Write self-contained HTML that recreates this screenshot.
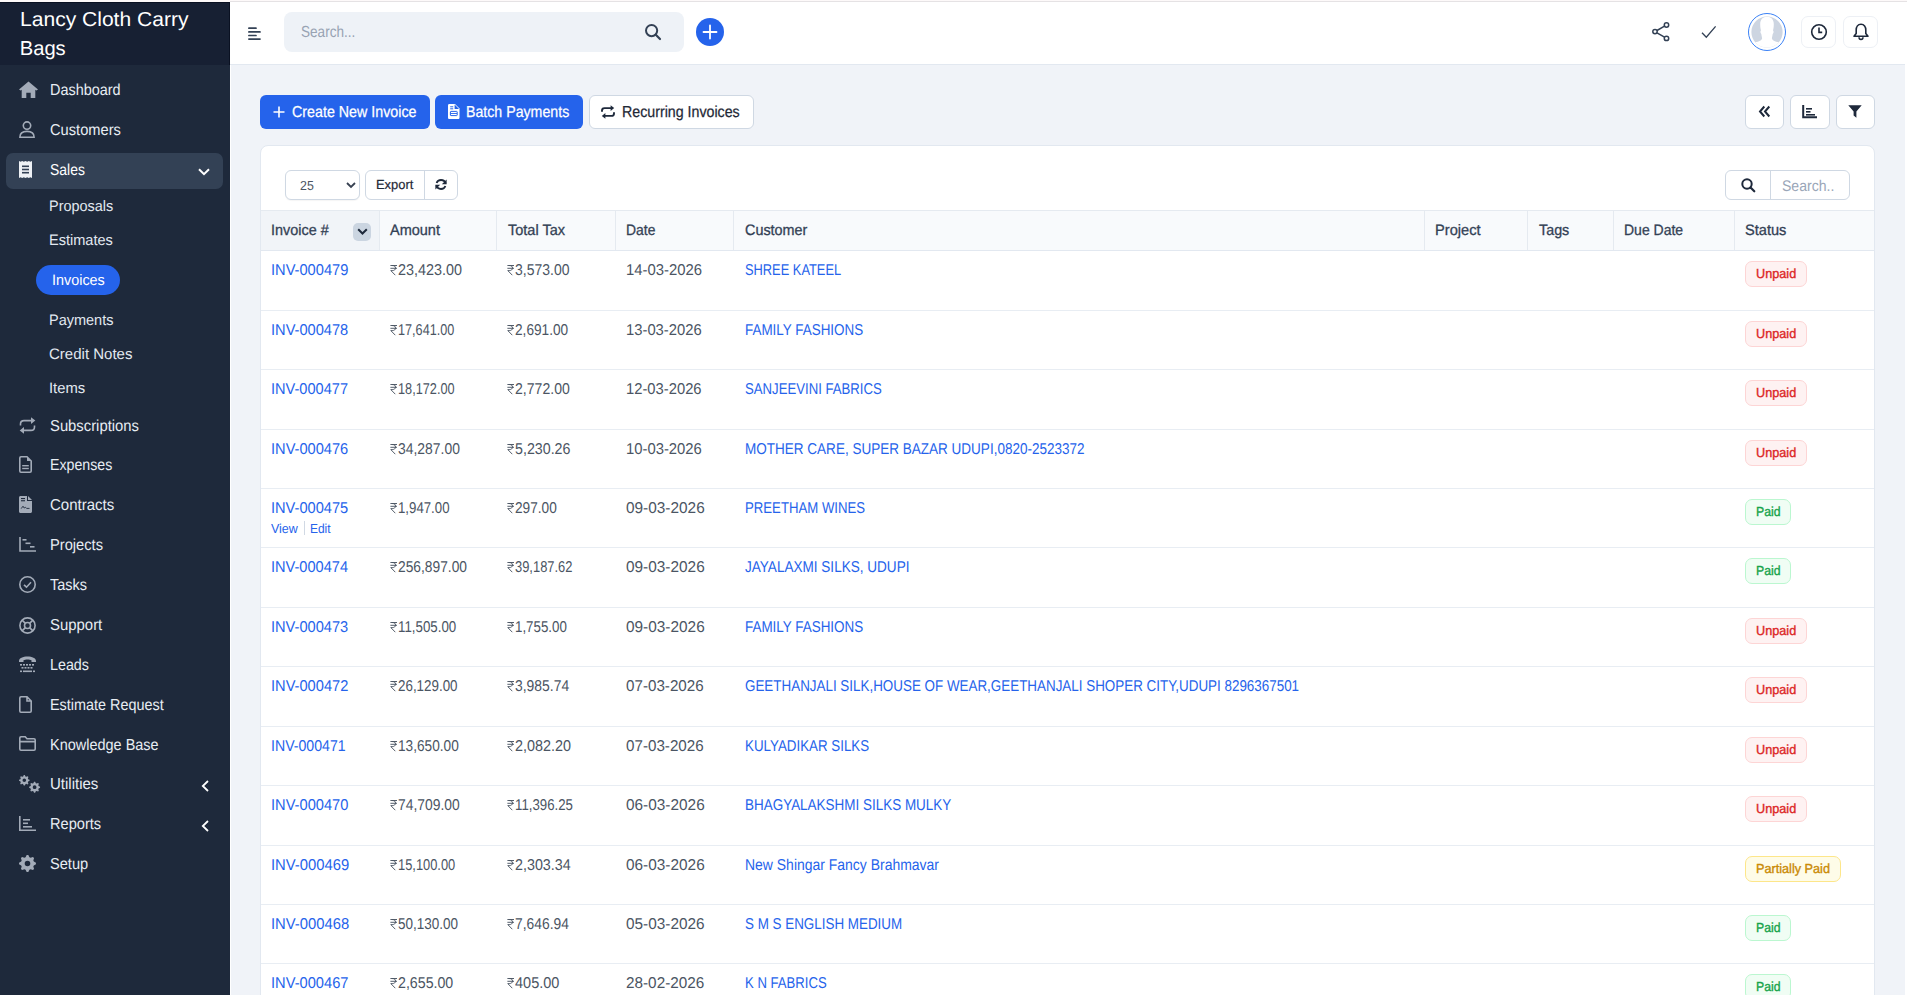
<!DOCTYPE html>
<html><head><meta charset="utf-8"><style>
*{box-sizing:border-box;margin:0;padding:0}
html,body{width:1907px;height:995px;overflow:hidden;background:#fff;font-family:"Liberation Sans",sans-serif;position:relative;text-rendering:geometricPrecision}
.t{position:absolute;line-height:1;white-space:nowrap;transform-origin:0 0}
svg{position:absolute;overflow:visible}
.b{position:absolute}
.ic{fill:#a3abb8}
.ics{fill:none;stroke:#a3abb8;stroke-width:1.6}
</style></head><body>
<div class="b" style="left:0px;top:0px;width:1907px;height:2px;background:#fdf9f9"></div>
<div class="b" style="left:230px;top:1px;width:1677px;height:1px;background:#e5e2e4"></div>
<div class="b" style="left:0px;top:2px;width:230px;height:993px;background:#1e293b"></div>
<div class="b" style="left:0px;top:2px;width:230px;height:63px;background:#172033;border-right:1px solid #0a1122;border-top:1px solid #0a1122"></div>
<div class="b" style="left:230px;top:2px;width:1675px;height:63px;background:#fff;border-bottom:1px solid #e2e8f0"></div>
<div class="b" style="left:231px;top:65px;width:1674px;height:930px;background:#f0f3f8"></div>
<div class="t" style="left:19.70px;top:10.00px;font-size:20.2px;color:#fff;transform:scaleX(1.0429);">Lancy Cloth Carry</div>
<div class="t" style="left:19.70px;top:39.00px;font-size:20.2px;color:#fff;">Bags</div>
<div class="b" style="left:6px;top:153px;width:217px;height:36px;border-radius:7px;background:#334155"></div>
<div class="b" style="left:36px;top:265px;width:84px;height:30px;border-radius:15px;background:#2563eb"></div>
<div class="t" style="left:50.30px;top:83.00px;font-size:15.84px;color:#e8edf3;transform:scaleX(0.9124);">Dashboard</div>
<div class="t" style="left:50.30px;top:123.00px;font-size:15.84px;color:#e8edf3;transform:scaleX(0.9258);">Customers</div>
<div class="t" style="left:50.30px;top:163.00px;font-size:15.84px;color:#fff;transform:scaleX(0.8808);">Sales</div>
<div class="t" style="left:50.30px;top:419.00px;font-size:15.84px;color:#e8edf3;transform:scaleX(0.9360);">Subscriptions</div>
<div class="t" style="left:50.30px;top:458.00px;font-size:15.84px;color:#e8edf3;transform:scaleX(0.8970);">Expenses</div>
<div class="t" style="left:50.30px;top:498.00px;font-size:15.84px;color:#e8edf3;transform:scaleX(0.9471);">Contracts</div>
<div class="t" style="left:50.30px;top:538.00px;font-size:15.84px;color:#e8edf3;transform:scaleX(0.9263);">Projects</div>
<div class="t" style="left:50.30px;top:578.00px;font-size:15.84px;color:#e8edf3;transform:scaleX(0.9138);">Tasks</div>
<div class="t" style="left:50.30px;top:618.00px;font-size:15.84px;color:#e8edf3;transform:scaleX(0.9427);">Support</div>
<div class="t" style="left:50.30px;top:658.00px;font-size:15.84px;color:#e8edf3;transform:scaleX(0.9037);">Leads</div>
<div class="t" style="left:50.30px;top:698.00px;font-size:15.84px;color:#e8edf3;transform:scaleX(0.9103);">Estimate Request</div>
<div class="t" style="left:50.30px;top:738.00px;font-size:15.84px;color:#e8edf3;transform:scaleX(0.9143);">Knowledge Base</div>
<div class="t" style="left:50.30px;top:777.00px;font-size:15.84px;color:#e8edf3;transform:scaleX(0.9481);">Utilities</div>
<div class="t" style="left:50.30px;top:817.00px;font-size:15.84px;color:#e8edf3;transform:scaleX(0.9231);">Reports</div>
<div class="t" style="left:50.30px;top:857.00px;font-size:15.84px;color:#e8edf3;transform:scaleX(0.9228);">Setup</div>
<div class="t" style="left:49.40px;top:199.00px;font-size:15.12px;color:#e2e8f0;transform:scaleX(0.9563);">Proposals</div>
<div class="t" style="left:49.40px;top:233.00px;font-size:15.12px;color:#e2e8f0;transform:scaleX(0.9627);">Estimates</div>
<div class="t" style="left:52.10px;top:273.00px;font-size:15.12px;color:#fff;transform:scaleX(0.9519);">Invoices</div>
<div class="t" style="left:49.40px;top:313.00px;font-size:15.12px;color:#e2e8f0;transform:scaleX(0.9594);">Payments</div>
<div class="t" style="left:49.40px;top:347.00px;font-size:15.12px;color:#e2e8f0;transform:scaleX(0.9937);">Credit Notes</div>
<div class="t" style="left:49.40px;top:381.00px;font-size:15.12px;color:#e2e8f0;transform:scaleX(0.9793);">Items</div>
<svg style="left:19px;top:81px" width="19" height="17" viewBox="0 0 19 17"><path class="ic" d="M9.5 0.5 L19 8.6 L17.4 9.6 L16.3 8.8 V17 H11.7 V11.8 H7.3 V17 H2.7 V8.8 L1.6 9.6 L0 8.6 Z"/></svg>
<svg style="left:19px;top:121px" width="16" height="17" viewBox="0 0 16 17"><circle class="ics" cx="8" cy="4.6" r="3.7"/><path class="ics" d="M0.9 16.2 C0.9 12.2 3.6 10.4 8 10.4 C12.4 10.4 15.1 12.2 15.1 16.2 Z"/></svg>
<svg style="left:19px;top:161px" width="13" height="17" viewBox="0 0 13 17"><path d="M0 0 L1.6 0.8 L3.2 0 L4.8 0.8 L6.5 0 L8.2 0.8 L9.8 0 L11.4 0.8 L13 0 V17 L11.4 16.2 L9.8 17 L8.2 16.2 L6.5 17 L4.8 16.2 L3.2 17 L1.6 16.2 L0 17 Z" fill="#eef1f5"/><rect x="3" y="4.5" width="7" height="1.6" fill="#334155"/><rect x="3" y="7.7" width="7" height="1.6" fill="#334155"/><rect x="3" y="10.9" width="7" height="1.6" fill="#334155"/></svg>
<svg style="left:198px;top:167.7px" width="12" height="8" viewBox="0 0 12 8"><path d="M1 1.2 L6 6.2 L11 1.2" fill="none" stroke="#fff" stroke-width="2"/></svg>
<svg style="left:19px;top:417px" width="17" height="17" viewBox="0 0 17 17"><path class="ics" stroke-width="2" d="M1.5 8.5 V7 C1.5 5 3 3.6 5 3.6 H13"/><path class="ic" d="M12 0.3 L16.3 3.6 L12 6.9 Z"/><path class="ics" stroke-width="2" d="M15.5 8.5 V10 C15.5 12 14 13.4 12 13.4 H4"/><path class="ic" d="M5 10.1 L0.7 13.4 L5 16.7 Z"/></svg>
<svg style="left:19px;top:456px" width="13" height="17" viewBox="0 0 13 17"><path class="ics" d="M2 0.8 H8 L12.2 5 V15 C12.2 15.7 11.7 16.2 11 16.2 H2 C1.3 16.2 0.8 15.7 0.8 15 V2 C0.8 1.3 1.3 0.8 2 0.8 Z"/><path class="ic" d="M8 0.8 V5 H12.2 Z"/><rect class="ic" x="3.2" y="9" width="6.6" height="1.4"/><rect class="ic" x="3.2" y="11.8" width="6.6" height="1.4"/></svg>
<svg style="left:19px;top:496px" width="13" height="17" viewBox="0 0 13 17"><path class="ic" d="M1.5 0 H8 V5 H13 V15.5 C13 16.3 12.3 17 11.5 17 H1.5 C0.7 17 0 16.3 0 15.5 V1.5 C0 0.7 0.7 0 1.5 0 Z M9 0 L13 4 H9 Z"/><rect x="2" y="2" width="4" height="1.1" fill="#1e293b"/><rect x="2" y="4.2" width="4" height="1.1" fill="#1e293b"/><path d="M2.2 12.6 L4 10.2 L5.2 12 L6.5 11.3 L7.6 12.4 H10.5" fill="none" stroke="#1e293b" stroke-width="0.9"/></svg>
<svg style="left:19px;top:537px" width="17" height="15" viewBox="0 0 17 15"><path class="ics" d="M1 0 V14 H17"/><rect class="ic" x="3.5" y="2" width="4" height="1.6"/><rect class="ic" x="6.5" y="5.5" width="5" height="1.6"/><rect class="ic" x="11" y="9" width="4.5" height="1.6"/></svg>
<svg style="left:19px;top:576px" width="17" height="17" viewBox="0 0 17 17"><circle class="ics" cx="8.5" cy="8.5" r="7.7"/><path class="ics" stroke-width="1.8" d="M5 8.8 L7.5 11.2 L12 6.3"/></svg>
<svg style="left:19px;top:617px" width="17" height="17" viewBox="0 0 17 17"><circle class="ics" cx="8.5" cy="8.5" r="7.6"/><circle class="ics" cx="8.5" cy="8.5" r="3"/><path class="ics" d="M3.1 3.1 L6.4 6.4 M13.9 3.1 L10.6 6.4 M3.1 13.9 L6.4 10.6 M13.9 13.9 L10.6 10.6"/></svg>
<svg style="left:19px;top:656px" width="17" height="17" viewBox="0 0 17 17"><path class="ic" d="M0 5 C0 2 4 0.5 8.5 0.5 C13 0.5 17 2 17 5 V6 H12.5 V4.3 C11.5 3.8 10 3.6 8.5 3.6 C7 3.6 5.5 3.8 4.5 4.3 V6 H0 Z"/><g class="ic"><rect x="1" y="8" width="2" height="1.6"/><rect x="4" y="8" width="2" height="1.6"/><rect x="7" y="8" width="2" height="1.6"/><rect x="10" y="8" width="2" height="1.6"/><rect x="13" y="8" width="2" height="1.6"/><rect x="2.5" y="11" width="2" height="1.6"/><rect x="5.5" y="11" width="2" height="1.6"/><rect x="8.5" y="11" width="2" height="1.6"/><rect x="11.5" y="11" width="2" height="1.6"/><rect x="1" y="14.5" width="2" height="1.6"/><rect x="4" y="14.5" width="9" height="1.6"/><rect x="14" y="14.5" width="2" height="1.6"/></g></svg>
<svg style="left:19px;top:696px" width="13" height="17" viewBox="0 0 13 17"><path class="ics" d="M2 0.8 H8 L12.2 5 V15 C12.2 15.7 11.7 16.2 11 16.2 H2 C1.3 16.2 0.8 15.7 0.8 15 V2 C0.8 1.3 1.3 0.8 2 0.8 Z M8 0.8 V5 H12.2"/></svg>
<svg style="left:19px;top:736px" width="17" height="15" viewBox="0 0 17 15"><path class="ics" d="M2 0.8 H6.2 L8 2.8 H15 C15.7 2.8 16.2 3.3 16.2 4 V13 C16.2 13.7 15.7 14.2 15 14.2 H2 C1.3 14.2 0.8 13.7 0.8 13 V2 C0.8 1.3 1.3 0.8 2 0.8 Z M0.8 5.6 H16.2"/></svg>
<svg style="left:19px;top:775px" width="21" height="18" viewBox="0 0 21 18"><path fill="#a3abb8" fill-rule="evenodd" d="M10.57 4.78 L10.57 5.82 L9.13 6.46 L8.83 7.19 L9.40 8.66 L8.66 9.40 L7.19 8.83 L6.46 9.13 L5.82 10.57 L4.78 10.57 L4.14 9.13 L3.41 8.83 L1.94 9.40 L1.20 8.66 L1.77 7.19 L1.47 6.46 L0.03 5.82 L0.03 4.78 L1.47 4.14 L1.77 3.41 L1.20 1.94 L1.94 1.20 L3.41 1.77 L4.14 1.47 L4.78 0.03 L5.82 0.03 L6.46 1.47 L7.19 1.77 L8.66 1.20 L9.40 1.94 L8.83 3.41 L9.13 4.14 Z M7.1 5.3 A1.8 1.8 0 1 0 3.5 5.3 A1.8 1.8 0 1 0 7.1 5.3 Z"/><path fill="#a3abb8" fill-rule="evenodd" d="M21.07 11.66 L21.07 12.74 L19.62 13.42 L19.30 14.18 L19.85 15.69 L19.09 16.45 L17.58 15.90 L16.82 16.22 L16.14 17.67 L15.06 17.67 L14.38 16.22 L13.62 15.90 L12.11 16.45 L11.35 15.69 L11.90 14.18 L11.58 13.42 L10.13 12.74 L10.13 11.66 L11.58 10.98 L11.90 10.22 L11.35 8.71 L12.11 7.95 L13.62 8.50 L14.38 8.18 L15.06 6.73 L16.14 6.73 L16.82 8.18 L17.58 8.50 L19.09 7.95 L19.85 8.71 L19.30 10.22 L19.62 10.98 Z M17.5 12.2 A1.9 1.9 0 1 0 13.7 12.2 A1.9 1.9 0 1 0 17.5 12.2 Z"/></svg>
<svg style="left:19px;top:816px" width="17" height="15" viewBox="0 0 17 15"><path class="ics" d="M0.8 0 V14.2 H17"/><rect class="ic" x="4" y="3" width="7" height="1.6"/><rect class="ic" x="4" y="6.5" width="5" height="1.6"/><rect class="ic" x="4" y="10" width="9" height="1.6"/></svg>
<svg style="left:19px;top:855px" width="17" height="17" viewBox="0 0 17 17"><path fill="#a3abb8" fill-rule="evenodd" d="M16.96 7.67 L16.96 9.33 L14.82 10.42 L14.32 11.61 L15.07 13.89 L13.89 15.07 L11.61 14.32 L10.42 14.82 L9.33 16.96 L7.67 16.96 L6.58 14.82 L5.39 14.32 L3.11 15.07 L1.93 13.89 L2.68 11.61 L2.18 10.42 L0.04 9.33 L0.04 7.67 L2.18 6.58 L2.68 5.39 L1.93 3.11 L3.11 1.93 L5.39 2.68 L6.58 2.18 L7.67 0.04 L9.33 0.04 L10.42 2.18 L11.61 2.68 L13.89 1.93 L15.07 3.11 L14.32 5.39 L14.82 6.58 Z M11.3 8.5 A2.8 2.8 0 1 0 5.7 8.5 A2.8 2.8 0 1 0 11.3 8.5 Z"/></svg>
<svg style="left:201px;top:780px" width="8" height="12" viewBox="0 0 8 12"><path d="M7 1 L1.8 6 L7 11" fill="none" stroke="#fff" stroke-width="1.8"/></svg>
<svg style="left:201px;top:820px" width="8" height="12" viewBox="0 0 8 12"><path d="M7 1 L1.8 6 L7 11" fill="none" stroke="#fff" stroke-width="1.8"/></svg>
<svg style="left:248px;top:27px" width="13" height="13" viewBox="0 0 13 13"><path stroke="#334155" stroke-width="1.7" stroke-linecap="round" d="M0.9 1.2 H8 M0.9 4.9 H12 M0.9 8.5 H8 M0.9 12.1 H12"/></svg>
<div class="b" style="left:284px;top:12px;width:400px;height:40px;border-radius:8px;background:#eef2f7"></div>
<div class="t" style="left:300.60px;top:25.00px;font-size:15.99px;color:#98a3b3;transform:scaleX(0.8486);">Search...</div>
<svg style="left:645px;top:24px" width="16" height="16" viewBox="0 0 16 16"><circle cx="6.6" cy="6.6" r="5.6" fill="none" stroke="#334155" stroke-width="2"/><path d="M10.8 10.8 L15 15" stroke="#334155" stroke-width="2.2" stroke-linecap="round"/></svg>
<div class="b" style="left:696px;top:18px;width:28px;height:28px;border-radius:50%;background:#2563eb"></div>
<svg style="left:696px;top:18px" width="28" height="28" viewBox="0 0 28 28"><path d="M14 7.5 V20.5 M7.5 14 H20.5" stroke="#fff" stroke-width="1.8" stroke-linecap="round"/></svg>
<svg style="left:1652px;top:22px" width="18" height="20" viewBox="0 0 18 20"><circle cx="14.5" cy="3" r="2.2" fill="none" stroke="#334155" stroke-width="1.5"/><circle cx="3" cy="9.6" r="2.2" fill="none" stroke="#334155" stroke-width="1.5"/><circle cx="14.5" cy="16.4" r="2.2" fill="none" stroke="#334155" stroke-width="1.5"/><path d="M5 8.5 L12.5 4.2 M5 10.8 L12.5 15.2" stroke="#334155" stroke-width="1.5"/></svg>
<svg style="left:1701px;top:25px" width="16" height="14" viewBox="0 0 16 14"><path d="M1 7.8 L5.3 12.2 L14.6 1.4" fill="none" stroke="#334155" stroke-width="1.3"/></svg>
<div class="b" style="left:1748px;top:13px;width:38px;height:38px;border-radius:50%;border:1.5px solid #3b82f6;background:#fff"></div>
<svg style="left:1750px;top:15px" width="34" height="34" viewBox="0 0 34 34"><defs><clipPath id="av"><circle cx="17" cy="17" r="15.6"/></clipPath></defs><g clip-path="url(#av)"><rect x="0" y="0" width="34" height="34" fill="#cdd5e1"/><path fill="#fff" d="M17 1.8 C21.5 1.8 23.8 4.8 23.8 9.2 C23.8 12 23.4 14 23 15.5 C23.9 16.2 23.7 18 22.7 19 C22.4 21 21.9 22.5 21.9 23.5 C21.9 25 25 26.5 29 27.5 L34 29 V34 H0 V29 L5 27.5 C9 26.5 12.1 25 12.1 23.5 C12.1 22.5 11.6 21 11.3 19 C10.3 18 10.1 16.2 11 15.5 C10.6 14 10.2 12 10.2 9.2 C10.2 4.8 12.5 1.8 17 1.8 Z"/></g></svg>
<div class="b" style="left:1801px;top:16px;width:35px;height:32px;border-radius:7px;border:1px solid #edf0f5"></div>
<div class="b" style="left:1843px;top:16px;width:35px;height:32px;border-radius:7px;border:1px solid #edf0f5"></div>
<svg style="left:1810px;top:23px" width="18" height="18" viewBox="0 0 18 18"><circle cx="9" cy="9" r="7.3" fill="none" stroke="#1e293b" stroke-width="1.6"/><path d="M9 4.6 V9.4 H12.2" fill="none" stroke="#1e293b" stroke-width="1.6"/></svg>
<svg style="left:1852px;top:23px" width="18" height="18" viewBox="0 0 18 18"><path d="M9 1.2 C5.8 1.2 4.2 3.8 4.2 7 V10.5 L2 13.2 H16 L13.8 10.5 V7 C13.8 3.8 12.2 1.2 9 1.2 Z" fill="none" stroke="#1e293b" stroke-width="1.6" stroke-linejoin="round"/><path d="M7 14.2 C7 15.6 7.9 16.4 9 16.4 C10.1 16.4 11 15.6 11 14.2" fill="none" stroke="#1e293b" stroke-width="1.5"/></svg>
<div class="b" style="left:260px;top:95px;width:170px;height:34px;border-radius:6px;background:#2563eb"></div>
<div class="b" style="left:435px;top:95px;width:148px;height:34px;border-radius:6px;background:#2563eb"></div>
<div class="b" style="left:589px;top:95px;width:165px;height:34px;border-radius:6px;background:#fff;border:1px solid #cfd8e3"></div>
<svg style="left:273px;top:106px" width="12" height="12" viewBox="0 0 12 12"><path d="M6 0.5 V11.5 M0.5 6 H11.5" stroke="#fff" stroke-width="1.6"/></svg>
<div class="t" style="left:292.30px;top:105.00px;font-size:15.84px;color:#fff;transform:scaleX(0.9015);-webkit-text-stroke:0.25px #fff">Create New Invoice</div>
<svg style="left:447.5px;top:104px" width="11.5" height="15" viewBox="0 0 11.5 15"><path fill="#fff" d="M1.3 0 H7 L11.5 4.5 V13.7 C11.5 14.4 10.9 15 10.2 15 H1.3 C0.6 15 0 14.4 0 13.7 V1.3 C0 0.6 0.6 0 1.3 0 Z"/><path fill="#2563eb" d="M6.6 0.6 V4.9 H11 Z"/><rect x="2.2" y="2.3" width="3" height="1" fill="#2563eb"/><rect x="2.2" y="4.3" width="3" height="1" fill="#2563eb"/><rect x="2.4" y="7.4" width="6.8" height="4.2" rx="0.6" fill="none" stroke="#2563eb" stroke-width="1"/><path d="M2.6 9.5 H9" stroke="#2563eb" stroke-width="0.9"/></svg>
<div class="t" style="left:466.30px;top:105.00px;font-size:15.84px;color:#fff;transform:scaleX(0.8956);-webkit-text-stroke:0.25px #fff">Batch Payments</div>
<svg style="left:601px;top:105px" width="14" height="14" viewBox="0 0 14 14"><path d="M1 6.8 V5.6 C1 4.2 2.1 3.1 3.5 3.1 H10.5" fill="none" stroke="#1e293b" stroke-width="1.9"/><path d="M9.6 0.2 L13.2 3.1 L9.6 6 Z" fill="#1e293b"/><path d="M13 7.2 V8.4 C13 9.8 11.9 10.9 10.5 10.9 H3.5" fill="none" stroke="#1e293b" stroke-width="1.9"/><path d="M4.4 8 L0.8 10.9 L4.4 13.8 Z" fill="#1e293b"/></svg>
<div class="t" style="left:622.20px;top:105.00px;font-size:15.84px;color:#1f2937;transform:scaleX(0.8980);-webkit-text-stroke:0.25px #1f2937">Recurring Invoices</div>
<div class="b" style="left:1745px;top:95px;width:39px;height:34px;border-radius:6px;background:#fff;border:1px solid #cfd8e3"></div>
<div class="b" style="left:1790px;top:95px;width:40px;height:34px;border-radius:6px;background:#fff;border:1px solid #cfd8e3"></div>
<div class="b" style="left:1836px;top:95px;width:39px;height:34px;border-radius:6px;background:#fff;border:1px solid #cfd8e3"></div>
<svg style="left:1758px;top:105px" width="13" height="13" viewBox="0 0 13 13"><path d="M6.3 1.5 L2 6.5 L6.3 11.5 M11.3 1.5 L7 6.5 L11.3 11.5" fill="none" stroke="#1e293b" stroke-width="2"/></svg>
<svg style="left:1802px;top:105px" width="16" height="14" viewBox="0 0 16 14"><path d="M1.2 0 V12.2 H15" fill="none" stroke="#1e293b" stroke-width="2"/><rect x="4" y="3" width="6" height="1.6" fill="#1e293b"/><rect x="4" y="6" width="4.5" height="1.6" fill="#1e293b"/><rect x="4" y="9" width="9" height="1.6" fill="#1e293b"/></svg>
<svg style="left:1848px;top:105px" width="14" height="13" viewBox="0 0 14 13"><path d="M0.3 0.3 H13.7 L8.4 6.6 V12.7 L5.6 10.6 V6.6 Z" fill="#1e293b"/></svg>
<div class="b" style="left:260px;top:145px;width:1615px;height:860px;border-radius:8px;background:#fff;border:1px solid #e2e8f0"></div>
<div class="b" style="left:285px;top:170px;width:75px;height:30px;border-radius:6px;background:#fff;border:1px solid #cfd8e3;box-shadow:0 1px 1px rgba(0,0,0,0.04)"></div>
<div class="t" style="left:300.30px;top:179.00px;font-size:13.08px;color:#4b5563;transform:scaleX(0.9485);">25</div>
<svg style="left:346px;top:182px" width="10" height="7" viewBox="0 0 10 7"><path d="M1 1 L5 5 L9 1" fill="none" stroke="#374151" stroke-width="1.8"/></svg>
<div class="b" style="left:365px;top:170px;width:93px;height:30px;border-radius:6px;background:#fff;border:1px solid #cfd8e3"></div>
<div class="b" style="left:424px;top:171px;width:1px;height:28px;background:#cfd8e3"></div>
<div class="t" style="left:376.30px;top:178.00px;font-size:13.23px;color:#1f2937;transform:scaleX(0.9781);-webkit-text-stroke:0.2px #1f2937">Export</div>
<svg style="left:435px;top:179px" width="12" height="11" viewBox="0 0 12 11"><path d="M10.6 4.4 C10 2.2 8.2 1 6 1 C3.8 1 2.2 2.3 1.6 4" fill="none" stroke="#1e293b" stroke-width="1.8"/><path d="M11.6 0.4 V5.2 H6.8 Z" fill="#1e293b"/><path d="M1.4 6.6 C2 8.8 3.8 10 6 10 C8.2 10 9.8 8.7 10.4 7" fill="none" stroke="#1e293b" stroke-width="1.8"/><path d="M0.4 10.6 V5.8 H5.2 Z" fill="#1e293b"/></svg>
<div class="b" style="left:1725px;top:170px;width:125px;height:30px;border-radius:6px;background:#fff;border:1px solid #cfd8e3"></div>
<div class="b" style="left:1770px;top:171px;width:1px;height:28px;background:#cfd8e3"></div>
<svg style="left:1741px;top:178px" width="15" height="15" viewBox="0 0 15 15"><circle cx="6" cy="6" r="4.7" fill="none" stroke="#1e293b" stroke-width="2"/><path d="M9.5 9.5 L13.3 13.3" stroke="#1e293b" stroke-width="2.2" stroke-linecap="round"/></svg>
<div class="t" style="left:1781.70px;top:179.00px;font-size:15.41px;color:#9aa6b8;transform:scaleX(0.9113);">Search..</div>
<div class="b" style="left:261px;top:210px;width:1613px;height:41px;background:#f8fafc;border-top:1px solid #e5eaf0;border-bottom:1px solid #e2e8f0"></div>
<div class="b" style="left:261px;top:211px;width:118px;height:39px;background:#f1f4f8"></div>
<div class="b" style="left:379px;top:211px;width:1px;height:39px;background:#e5eaf0"></div>
<div class="b" style="left:496px;top:211px;width:1px;height:39px;background:#e5eaf0"></div>
<div class="b" style="left:615px;top:211px;width:1px;height:39px;background:#e5eaf0"></div>
<div class="b" style="left:733px;top:211px;width:1px;height:39px;background:#e5eaf0"></div>
<div class="b" style="left:1424px;top:211px;width:1px;height:39px;background:#e5eaf0"></div>
<div class="b" style="left:1527px;top:211px;width:1px;height:39px;background:#e5eaf0"></div>
<div class="b" style="left:1613px;top:211px;width:1px;height:39px;background:#e5eaf0"></div>
<div class="b" style="left:1734px;top:211px;width:1px;height:39px;background:#e5eaf0"></div>
<div class="b" style="left:353px;top:223px;width:18px;height:18px;border-radius:5px;background:#cbd5e1"></div>
<svg style="left:356.5px;top:228px" width="11" height="8" viewBox="0 0 11 8"><path d="M1.2 1.2 L5.5 5.5 L9.8 1.2" fill="none" stroke="#1e293b" stroke-width="2"/></svg>
<div class="t" style="left:271.40px;top:223.00px;font-size:15.12px;color:#334155;transform:scaleX(0.9534);-webkit-text-stroke:0.3px #334155">Invoice #</div>
<div class="t" style="left:390.30px;top:223.00px;font-size:15.12px;color:#334155;transform:scaleX(0.9595);-webkit-text-stroke:0.3px #334155">Amount</div>
<div class="t" style="left:507.90px;top:223.00px;font-size:15.12px;color:#334155;transform:scaleX(0.9597);-webkit-text-stroke:0.3px #334155">Total Tax</div>
<div class="t" style="left:626.10px;top:223.00px;font-size:15.12px;color:#334155;transform:scaleX(0.9205);-webkit-text-stroke:0.3px #334155">Date</div>
<div class="t" style="left:744.70px;top:223.00px;font-size:15.12px;color:#334155;transform:scaleX(0.9521);-webkit-text-stroke:0.3px #334155">Customer</div>
<div class="t" style="left:1434.60px;top:223.00px;font-size:15.12px;color:#334155;transform:scaleX(0.9690);-webkit-text-stroke:0.3px #334155">Project</div>
<div class="t" style="left:1538.80px;top:223.00px;font-size:15.12px;color:#334155;transform:scaleX(0.9487);-webkit-text-stroke:0.3px #334155">Tags</div>
<div class="t" style="left:1624.40px;top:223.00px;font-size:15.12px;color:#334155;transform:scaleX(0.9268);-webkit-text-stroke:0.3px #334155">Due Date</div>
<div class="t" style="left:1744.50px;top:223.00px;font-size:15.12px;color:#334155;transform:scaleX(0.9658);-webkit-text-stroke:0.3px #334155">Status</div>
<div class="t" style="left:270.80px;top:263.00px;font-size:15.7px;color:#2563eb;transform:scaleX(0.9332);">INV-000479</div>
<svg style="left:390px;top:264.8px" width="8" height="11" viewBox="0 0 8 11"><path d="M0.4 0.5 H7 M0.4 3.3 H7 M2 0.5 C4.5 0.5 5.5 1.5 5.5 3.1 C5.5 4.7 4.3 5.6 2.2 5.6 H0.8 L5.3 10.2" fill="none" stroke="#4b5563" stroke-width="0.95"/></svg>
<div class="t" style="left:398.10px;top:263.00px;font-size:15.7px;color:#4b5563;transform:scaleX(0.9166);">23,423.00</div>
<svg style="left:507px;top:264.8px" width="8" height="11" viewBox="0 0 8 11"><path d="M0.4 0.5 H7 M0.4 3.3 H7 M2 0.5 C4.5 0.5 5.5 1.5 5.5 3.1 C5.5 4.7 4.3 5.6 2.2 5.6 H0.8 L5.3 10.2" fill="none" stroke="#4b5563" stroke-width="0.95"/></svg>
<div class="t" style="left:515.10px;top:263.00px;font-size:15.7px;color:#4b5563;transform:scaleX(0.8921);">3,573.00</div>
<div class="t" style="left:626.00px;top:263.00px;font-size:15.7px;color:#4b5563;transform:scaleX(0.9476);">14-03-2026</div>
<div class="t" style="left:744.60px;top:263.00px;font-size:15.7px;color:#2563eb;transform:scaleX(0.8189);">SHREE KATEEL</div>
<div class="b" style="left:1745px;top:261px;width:62px;height:26px;border-radius:7px;background:#fef2f2;border:1px solid #fdd5d5"></div>
<div class="t" style="left:1755.60px;top:267.00px;font-size:13.08px;color:#dc2626;transform:scaleX(0.9698);-webkit-text-stroke:0.35px #dc2626">Unpaid</div>
<div class="b" style="left:261px;top:310px;width:1613px;height:1px;background:#e8edf3"></div>
<div class="t" style="left:270.80px;top:323.00px;font-size:15.7px;color:#2563eb;transform:scaleX(0.9323);">INV-000478</div>
<svg style="left:390px;top:324.8px" width="8" height="11" viewBox="0 0 8 11"><path d="M0.4 0.5 H7 M0.4 3.3 H7 M2 0.5 C4.5 0.5 5.5 1.5 5.5 3.1 C5.5 4.7 4.3 5.6 2.2 5.6 H0.8 L5.3 10.2" fill="none" stroke="#4b5563" stroke-width="0.95"/></svg>
<div class="t" style="left:398.10px;top:323.00px;font-size:15.7px;color:#4b5563;transform:scaleX(0.8073);">17,641.00</div>
<svg style="left:507px;top:324.8px" width="8" height="11" viewBox="0 0 8 11"><path d="M0.4 0.5 H7 M0.4 3.3 H7 M2 0.5 C4.5 0.5 5.5 1.5 5.5 3.1 C5.5 4.7 4.3 5.6 2.2 5.6 H0.8 L5.3 10.2" fill="none" stroke="#4b5563" stroke-width="0.95"/></svg>
<div class="t" style="left:515.10px;top:323.00px;font-size:15.7px;color:#4b5563;transform:scaleX(0.8702);">2,691.00</div>
<div class="t" style="left:626.00px;top:323.00px;font-size:15.7px;color:#4b5563;transform:scaleX(0.9429);">13-03-2026</div>
<div class="t" style="left:744.60px;top:323.00px;font-size:15.7px;color:#2563eb;transform:scaleX(0.8564);">FAMILY FASHIONS</div>
<div class="b" style="left:1745px;top:321px;width:62px;height:26px;border-radius:7px;background:#fef2f2;border:1px solid #fdd5d5"></div>
<div class="t" style="left:1755.60px;top:327.00px;font-size:13.08px;color:#dc2626;transform:scaleX(0.9698);-webkit-text-stroke:0.35px #dc2626">Unpaid</div>
<div class="b" style="left:261px;top:369px;width:1613px;height:1px;background:#e8edf3"></div>
<div class="t" style="left:270.80px;top:382.00px;font-size:15.7px;color:#2563eb;transform:scaleX(0.9292);">INV-000477</div>
<svg style="left:390px;top:383.8px" width="8" height="11" viewBox="0 0 8 11"><path d="M0.4 0.5 H7 M0.4 3.3 H7 M2 0.5 C4.5 0.5 5.5 1.5 5.5 3.1 C5.5 4.7 4.3 5.6 2.2 5.6 H0.8 L5.3 10.2" fill="none" stroke="#4b5563" stroke-width="0.95"/></svg>
<div class="t" style="left:398.10px;top:382.00px;font-size:15.7px;color:#4b5563;transform:scaleX(0.8117);">18,172.00</div>
<svg style="left:507px;top:383.8px" width="8" height="11" viewBox="0 0 8 11"><path d="M0.4 0.5 H7 M0.4 3.3 H7 M2 0.5 C4.5 0.5 5.5 1.5 5.5 3.1 C5.5 4.7 4.3 5.6 2.2 5.6 H0.8 L5.3 10.2" fill="none" stroke="#4b5563" stroke-width="0.95"/></svg>
<div class="t" style="left:515.10px;top:382.00px;font-size:15.7px;color:#4b5563;transform:scaleX(0.8972);">2,772.00</div>
<div class="t" style="left:626.00px;top:382.00px;font-size:15.7px;color:#4b5563;transform:scaleX(0.9416);">12-03-2026</div>
<div class="t" style="left:744.60px;top:382.00px;font-size:15.7px;color:#2563eb;transform:scaleX(0.8392);">SANJEEVINI FABRICS</div>
<div class="b" style="left:1745px;top:380px;width:62px;height:26px;border-radius:7px;background:#fef2f2;border:1px solid #fdd5d5"></div>
<div class="t" style="left:1755.60px;top:386.00px;font-size:13.08px;color:#dc2626;transform:scaleX(0.9698);-webkit-text-stroke:0.35px #dc2626">Unpaid</div>
<div class="b" style="left:261px;top:429px;width:1613px;height:1px;background:#e8edf3"></div>
<div class="t" style="left:270.80px;top:442.00px;font-size:15.7px;color:#2563eb;transform:scaleX(0.9323);">INV-000476</div>
<svg style="left:390px;top:443.8px" width="8" height="11" viewBox="0 0 8 11"><path d="M0.4 0.5 H7 M0.4 3.3 H7 M2 0.5 C4.5 0.5 5.5 1.5 5.5 3.1 C5.5 4.7 4.3 5.6 2.2 5.6 H0.8 L5.3 10.2" fill="none" stroke="#4b5563" stroke-width="0.95"/></svg>
<div class="t" style="left:398.10px;top:442.00px;font-size:15.7px;color:#4b5563;transform:scaleX(0.8871);">34,287.00</div>
<svg style="left:507px;top:443.8px" width="8" height="11" viewBox="0 0 8 11"><path d="M0.4 0.5 H7 M0.4 3.3 H7 M2 0.5 C4.5 0.5 5.5 1.5 5.5 3.1 C5.5 4.7 4.3 5.6 2.2 5.6 H0.8 L5.3 10.2" fill="none" stroke="#4b5563" stroke-width="0.95"/></svg>
<div class="t" style="left:515.10px;top:442.00px;font-size:15.7px;color:#4b5563;transform:scaleX(0.9081);">5,230.26</div>
<div class="t" style="left:626.00px;top:442.00px;font-size:15.7px;color:#4b5563;transform:scaleX(0.9451);">10-03-2026</div>
<div class="t" style="left:744.60px;top:442.00px;font-size:15.7px;color:#2563eb;transform:scaleX(0.8618);">MOTHER CARE, SUPER BAZAR UDUPI,0820-2523372</div>
<div class="b" style="left:1745px;top:440px;width:62px;height:26px;border-radius:7px;background:#fef2f2;border:1px solid #fdd5d5"></div>
<div class="t" style="left:1755.60px;top:446.00px;font-size:13.08px;color:#dc2626;transform:scaleX(0.9698);-webkit-text-stroke:0.35px #dc2626">Unpaid</div>
<div class="b" style="left:261px;top:488px;width:1613px;height:1px;background:#e8edf3"></div>
<div class="t" style="left:270.80px;top:501.00px;font-size:15.7px;color:#2563eb;transform:scaleX(0.9312);">INV-000475</div>
<svg style="left:390px;top:502.8px" width="8" height="11" viewBox="0 0 8 11"><path d="M0.4 0.5 H7 M0.4 3.3 H7 M2 0.5 C4.5 0.5 5.5 1.5 5.5 3.1 C5.5 4.7 4.3 5.6 2.2 5.6 H0.8 L5.3 10.2" fill="none" stroke="#4b5563" stroke-width="0.95"/></svg>
<div class="t" style="left:398.10px;top:501.00px;font-size:15.7px;color:#4b5563;transform:scaleX(0.8434);">1,947.00</div>
<svg style="left:507px;top:502.8px" width="8" height="11" viewBox="0 0 8 11"><path d="M0.4 0.5 H7 M0.4 3.3 H7 M2 0.5 C4.5 0.5 5.5 1.5 5.5 3.1 C5.5 4.7 4.3 5.6 2.2 5.6 H0.8 L5.3 10.2" fill="none" stroke="#4b5563" stroke-width="0.95"/></svg>
<div class="t" style="left:515.10px;top:501.00px;font-size:15.7px;color:#4b5563;transform:scaleX(0.8697);">297.00</div>
<div class="t" style="left:626.00px;top:501.00px;font-size:15.7px;color:#4b5563;transform:scaleX(0.9808);">09-03-2026</div>
<div class="t" style="left:744.60px;top:501.00px;font-size:15.7px;color:#2563eb;transform:scaleX(0.8403);">PREETHAM WINES</div>
<div class="b" style="left:1745px;top:499px;width:46px;height:26px;border-radius:7px;background:#f0fdf4;border:1px solid #bbf7d0"></div>
<div class="t" style="left:1755.60px;top:505.00px;font-size:13.08px;color:#16a34a;transform:scaleX(0.9358);-webkit-text-stroke:0.35px #16a34a">Paid</div>
<div class="t" style="left:271.40px;top:522.00px;font-size:13.08px;color:#2563eb;transform:scaleX(0.9532);">View</div>
<div class="b" style="left:303.5px;top:521px;width:1px;height:14px;background:#d1d9e4"></div>
<div class="t" style="left:310.20px;top:522.00px;font-size:13.08px;color:#2563eb;transform:scaleX(0.9140);">Edit</div>
<div class="b" style="left:261px;top:547px;width:1613px;height:1px;background:#e8edf3"></div>
<div class="t" style="left:270.80px;top:560.00px;font-size:15.7px;color:#2563eb;transform:scaleX(0.9296);">INV-000474</div>
<svg style="left:390px;top:561.8px" width="8" height="11" viewBox="0 0 8 11"><path d="M0.4 0.5 H7 M0.4 3.3 H7 M2 0.5 C4.5 0.5 5.5 1.5 5.5 3.1 C5.5 4.7 4.3 5.6 2.2 5.6 H0.8 L5.3 10.2" fill="none" stroke="#4b5563" stroke-width="0.95"/></svg>
<div class="t" style="left:398.10px;top:560.00px;font-size:15.7px;color:#4b5563;transform:scaleX(0.8793);">256,897.00</div>
<svg style="left:507px;top:561.8px" width="8" height="11" viewBox="0 0 8 11"><path d="M0.4 0.5 H7 M0.4 3.3 H7 M2 0.5 C4.5 0.5 5.5 1.5 5.5 3.1 C5.5 4.7 4.3 5.6 2.2 5.6 H0.8 L5.3 10.2" fill="none" stroke="#4b5563" stroke-width="0.95"/></svg>
<div class="t" style="left:515.10px;top:560.00px;font-size:15.7px;color:#4b5563;transform:scaleX(0.8233);">39,187.62</div>
<div class="t" style="left:626.00px;top:560.00px;font-size:15.7px;color:#4b5563;transform:scaleX(0.9808);">09-03-2026</div>
<div class="t" style="left:744.60px;top:560.00px;font-size:15.7px;color:#2563eb;transform:scaleX(0.8640);">JAYALAXMI SILKS, UDUPI</div>
<div class="b" style="left:1745px;top:558px;width:46px;height:26px;border-radius:7px;background:#f0fdf4;border:1px solid #bbf7d0"></div>
<div class="t" style="left:1755.60px;top:564.00px;font-size:13.08px;color:#16a34a;transform:scaleX(0.9358);-webkit-text-stroke:0.35px #16a34a">Paid</div>
<div class="b" style="left:261px;top:607px;width:1613px;height:1px;background:#e8edf3"></div>
<div class="t" style="left:270.80px;top:620.00px;font-size:15.7px;color:#2563eb;transform:scaleX(0.9317);">INV-000473</div>
<svg style="left:390px;top:621.8px" width="8" height="11" viewBox="0 0 8 11"><path d="M0.4 0.5 H7 M0.4 3.3 H7 M2 0.5 C4.5 0.5 5.5 1.5 5.5 3.1 C5.5 4.7 4.3 5.6 2.2 5.6 H0.8 L5.3 10.2" fill="none" stroke="#4b5563" stroke-width="0.95"/></svg>
<div class="t" style="left:398.10px;top:620.00px;font-size:15.7px;color:#4b5563;transform:scaleX(0.8485);">11,505.00</div>
<svg style="left:507px;top:621.8px" width="8" height="11" viewBox="0 0 8 11"><path d="M0.4 0.5 H7 M0.4 3.3 H7 M2 0.5 C4.5 0.5 5.5 1.5 5.5 3.1 C5.5 4.7 4.3 5.6 2.2 5.6 H0.8 L5.3 10.2" fill="none" stroke="#4b5563" stroke-width="0.95"/></svg>
<div class="t" style="left:515.10px;top:620.00px;font-size:15.7px;color:#4b5563;transform:scaleX(0.8500);">1,755.00</div>
<div class="t" style="left:626.00px;top:620.00px;font-size:15.7px;color:#4b5563;transform:scaleX(0.9808);">09-03-2026</div>
<div class="t" style="left:744.60px;top:620.00px;font-size:15.7px;color:#2563eb;transform:scaleX(0.8564);">FAMILY FASHIONS</div>
<div class="b" style="left:1745px;top:618px;width:62px;height:26px;border-radius:7px;background:#fef2f2;border:1px solid #fdd5d5"></div>
<div class="t" style="left:1755.60px;top:624.00px;font-size:13.08px;color:#dc2626;transform:scaleX(0.9698);-webkit-text-stroke:0.35px #dc2626">Unpaid</div>
<div class="b" style="left:261px;top:666px;width:1613px;height:1px;background:#e8edf3"></div>
<div class="t" style="left:270.80px;top:679.00px;font-size:15.7px;color:#2563eb;transform:scaleX(0.9331);">INV-000472</div>
<svg style="left:390px;top:680.8px" width="8" height="11" viewBox="0 0 8 11"><path d="M0.4 0.5 H7 M0.4 3.3 H7 M2 0.5 C4.5 0.5 5.5 1.5 5.5 3.1 C5.5 4.7 4.3 5.6 2.2 5.6 H0.8 L5.3 10.2" fill="none" stroke="#4b5563" stroke-width="0.95"/></svg>
<div class="t" style="left:398.10px;top:679.00px;font-size:15.7px;color:#4b5563;transform:scaleX(0.8536);">26,129.00</div>
<svg style="left:507px;top:680.8px" width="8" height="11" viewBox="0 0 8 11"><path d="M0.4 0.5 H7 M0.4 3.3 H7 M2 0.5 C4.5 0.5 5.5 1.5 5.5 3.1 C5.5 4.7 4.3 5.6 2.2 5.6 H0.8 L5.3 10.2" fill="none" stroke="#4b5563" stroke-width="0.95"/></svg>
<div class="t" style="left:515.10px;top:679.00px;font-size:15.7px;color:#4b5563;transform:scaleX(0.8874);">3,985.74</div>
<div class="t" style="left:626.00px;top:679.00px;font-size:15.7px;color:#4b5563;transform:scaleX(0.9685);">07-03-2026</div>
<div class="t" style="left:744.60px;top:679.00px;font-size:15.7px;color:#2563eb;transform:scaleX(0.8546);">GEETHANJALI SILK,HOUSE OF WEAR,GEETHANJALI SHOPER CITY,UDUPI 8296367501</div>
<div class="b" style="left:1745px;top:677px;width:62px;height:26px;border-radius:7px;background:#fef2f2;border:1px solid #fdd5d5"></div>
<div class="t" style="left:1755.60px;top:683.00px;font-size:13.08px;color:#dc2626;transform:scaleX(0.9698);-webkit-text-stroke:0.35px #dc2626">Unpaid</div>
<div class="b" style="left:261px;top:726px;width:1613px;height:1px;background:#e8edf3"></div>
<div class="t" style="left:270.80px;top:739.00px;font-size:15.7px;color:#2563eb;transform:scaleX(0.9006);">INV-000471</div>
<svg style="left:390px;top:740.8px" width="8" height="11" viewBox="0 0 8 11"><path d="M0.4 0.5 H7 M0.4 3.3 H7 M2 0.5 C4.5 0.5 5.5 1.5 5.5 3.1 C5.5 4.7 4.3 5.6 2.2 5.6 H0.8 L5.3 10.2" fill="none" stroke="#4b5563" stroke-width="0.95"/></svg>
<div class="t" style="left:398.10px;top:739.00px;font-size:15.7px;color:#4b5563;transform:scaleX(0.8703);">13,650.00</div>
<svg style="left:507px;top:740.8px" width="8" height="11" viewBox="0 0 8 11"><path d="M0.4 0.5 H7 M0.4 3.3 H7 M2 0.5 C4.5 0.5 5.5 1.5 5.5 3.1 C5.5 4.7 4.3 5.6 2.2 5.6 H0.8 L5.3 10.2" fill="none" stroke="#4b5563" stroke-width="0.95"/></svg>
<div class="t" style="left:515.10px;top:739.00px;font-size:15.7px;color:#4b5563;transform:scaleX(0.9168);">2,082.20</div>
<div class="t" style="left:626.00px;top:739.00px;font-size:15.7px;color:#4b5563;transform:scaleX(0.9685);">07-03-2026</div>
<div class="t" style="left:744.60px;top:739.00px;font-size:15.7px;color:#2563eb;transform:scaleX(0.8509);">KULYADIKAR SILKS</div>
<div class="b" style="left:1745px;top:737px;width:62px;height:26px;border-radius:7px;background:#fef2f2;border:1px solid #fdd5d5"></div>
<div class="t" style="left:1755.60px;top:743.00px;font-size:13.08px;color:#dc2626;transform:scaleX(0.9698);-webkit-text-stroke:0.35px #dc2626">Unpaid</div>
<div class="b" style="left:261px;top:785px;width:1613px;height:1px;background:#e8edf3"></div>
<div class="t" style="left:270.80px;top:798.00px;font-size:15.7px;color:#2563eb;transform:scaleX(0.9340);">INV-000470</div>
<svg style="left:390px;top:799.8px" width="8" height="11" viewBox="0 0 8 11"><path d="M0.4 0.5 H7 M0.4 3.3 H7 M2 0.5 C4.5 0.5 5.5 1.5 5.5 3.1 C5.5 4.7 4.3 5.6 2.2 5.6 H0.8 L5.3 10.2" fill="none" stroke="#4b5563" stroke-width="0.95"/></svg>
<div class="t" style="left:398.10px;top:798.00px;font-size:15.7px;color:#4b5563;transform:scaleX(0.8838);">74,709.00</div>
<svg style="left:507px;top:799.8px" width="8" height="11" viewBox="0 0 8 11"><path d="M0.4 0.5 H7 M0.4 3.3 H7 M2 0.5 C4.5 0.5 5.5 1.5 5.5 3.1 C5.5 4.7 4.3 5.6 2.2 5.6 H0.8 L5.3 10.2" fill="none" stroke="#4b5563" stroke-width="0.95"/></svg>
<div class="t" style="left:515.10px;top:798.00px;font-size:15.7px;color:#4b5563;transform:scaleX(0.8434);">11,396.25</div>
<div class="t" style="left:626.00px;top:798.00px;font-size:15.7px;color:#4b5563;transform:scaleX(0.9808);">06-03-2026</div>
<div class="t" style="left:744.60px;top:798.00px;font-size:15.7px;color:#2563eb;transform:scaleX(0.8583);">BHAGYALAKSHMI SILKS MULKY</div>
<div class="b" style="left:1745px;top:796px;width:62px;height:26px;border-radius:7px;background:#fef2f2;border:1px solid #fdd5d5"></div>
<div class="t" style="left:1755.60px;top:802.00px;font-size:13.08px;color:#dc2626;transform:scaleX(0.9698);-webkit-text-stroke:0.35px #dc2626">Unpaid</div>
<div class="b" style="left:261px;top:845px;width:1613px;height:1px;background:#e8edf3"></div>
<div class="t" style="left:270.80px;top:858.00px;font-size:15.7px;color:#2563eb;transform:scaleX(0.9434);">INV-000469</div>
<svg style="left:390px;top:859.8px" width="8" height="11" viewBox="0 0 8 11"><path d="M0.4 0.5 H7 M0.4 3.3 H7 M2 0.5 C4.5 0.5 5.5 1.5 5.5 3.1 C5.5 4.7 4.3 5.6 2.2 5.6 H0.8 L5.3 10.2" fill="none" stroke="#4b5563" stroke-width="0.95"/></svg>
<div class="t" style="left:398.10px;top:858.00px;font-size:15.7px;color:#4b5563;transform:scaleX(0.8203);">15,100.00</div>
<svg style="left:507px;top:859.8px" width="8" height="11" viewBox="0 0 8 11"><path d="M0.4 0.5 H7 M0.4 3.3 H7 M2 0.5 C4.5 0.5 5.5 1.5 5.5 3.1 C5.5 4.7 4.3 5.6 2.2 5.6 H0.8 L5.3 10.2" fill="none" stroke="#4b5563" stroke-width="0.95"/></svg>
<div class="t" style="left:515.10px;top:858.00px;font-size:15.7px;color:#4b5563;transform:scaleX(0.9123);">2,303.34</div>
<div class="t" style="left:626.00px;top:858.00px;font-size:15.7px;color:#4b5563;transform:scaleX(0.9808);">06-03-2026</div>
<div class="t" style="left:744.60px;top:858.00px;font-size:15.7px;color:#2563eb;transform:scaleX(0.8900);">New Shingar Fancy Brahmavar</div>
<div class="b" style="left:1745px;top:856px;width:96px;height:26px;border-radius:7px;background:#fefce8;border:1px solid #fde68a"></div>
<div class="t" style="left:1755.60px;top:862.00px;font-size:13.08px;color:#ca8a04;transform:scaleX(0.9694);-webkit-text-stroke:0.35px #ca8a04">Partially Paid</div>
<div class="b" style="left:261px;top:904px;width:1613px;height:1px;background:#e8edf3"></div>
<div class="t" style="left:270.80px;top:917.00px;font-size:15.7px;color:#2563eb;transform:scaleX(0.9432);">INV-000468</div>
<svg style="left:390px;top:918.8px" width="8" height="11" viewBox="0 0 8 11"><path d="M0.4 0.5 H7 M0.4 3.3 H7 M2 0.5 C4.5 0.5 5.5 1.5 5.5 3.1 C5.5 4.7 4.3 5.6 2.2 5.6 H0.8 L5.3 10.2" fill="none" stroke="#4b5563" stroke-width="0.95"/></svg>
<div class="t" style="left:398.10px;top:917.00px;font-size:15.7px;color:#4b5563;transform:scaleX(0.8603);">50,130.00</div>
<svg style="left:507px;top:918.8px" width="8" height="11" viewBox="0 0 8 11"><path d="M0.4 0.5 H7 M0.4 3.3 H7 M2 0.5 C4.5 0.5 5.5 1.5 5.5 3.1 C5.5 4.7 4.3 5.6 2.2 5.6 H0.8 L5.3 10.2" fill="none" stroke="#4b5563" stroke-width="0.95"/></svg>
<div class="t" style="left:515.10px;top:917.00px;font-size:15.7px;color:#4b5563;transform:scaleX(0.8830);">7,646.94</div>
<div class="t" style="left:626.00px;top:917.00px;font-size:15.7px;color:#4b5563;transform:scaleX(0.9788);">05-03-2026</div>
<div class="t" style="left:744.60px;top:917.00px;font-size:15.7px;color:#2563eb;transform:scaleX(0.8545);">S M S ENGLISH MEDIUM</div>
<div class="b" style="left:1745px;top:915px;width:46px;height:26px;border-radius:7px;background:#f0fdf4;border:1px solid #bbf7d0"></div>
<div class="t" style="left:1755.60px;top:921.00px;font-size:13.08px;color:#16a34a;transform:scaleX(0.9358);-webkit-text-stroke:0.35px #16a34a">Paid</div>
<div class="b" style="left:261px;top:963px;width:1613px;height:1px;background:#e8edf3"></div>
<div class="t" style="left:270.80px;top:976.00px;font-size:15.7px;color:#2563eb;transform:scaleX(0.9348);">INV-000467</div>
<svg style="left:390px;top:977.8px" width="8" height="11" viewBox="0 0 8 11"><path d="M0.4 0.5 H7 M0.4 3.3 H7 M2 0.5 C4.5 0.5 5.5 1.5 5.5 3.1 C5.5 4.7 4.3 5.6 2.2 5.6 H0.8 L5.3 10.2" fill="none" stroke="#4b5563" stroke-width="0.95"/></svg>
<div class="t" style="left:398.10px;top:976.00px;font-size:15.7px;color:#4b5563;transform:scaleX(0.9050);">2,655.00</div>
<svg style="left:507px;top:977.8px" width="8" height="11" viewBox="0 0 8 11"><path d="M0.4 0.5 H7 M0.4 3.3 H7 M2 0.5 C4.5 0.5 5.5 1.5 5.5 3.1 C5.5 4.7 4.3 5.6 2.2 5.6 H0.8 L5.3 10.2" fill="none" stroke="#4b5563" stroke-width="0.95"/></svg>
<div class="t" style="left:515.10px;top:976.00px;font-size:15.7px;color:#4b5563;transform:scaleX(0.9262);">405.00</div>
<div class="t" style="left:626.00px;top:976.00px;font-size:15.7px;color:#4b5563;transform:scaleX(0.9757);">28-02-2026</div>
<div class="t" style="left:744.60px;top:976.00px;font-size:15.7px;color:#2563eb;transform:scaleX(0.8362);">K N FABRICS</div>
<div class="b" style="left:1745px;top:974px;width:46px;height:26px;border-radius:7px;background:#f0fdf4;border:1px solid #bbf7d0"></div>
<div class="t" style="left:1755.60px;top:980.00px;font-size:13.08px;color:#16a34a;transform:scaleX(0.9358);-webkit-text-stroke:0.35px #16a34a">Paid</div>
</body></html>
